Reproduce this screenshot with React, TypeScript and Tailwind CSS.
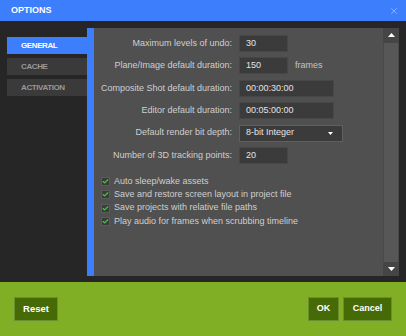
import { Check, X } from "lucide-react";

const rows = [
  { label: "Maximum levels of undo:", value: "30", width: "w-[49px]", suffix: "frames", showSuffix: false },
  { label: "Plane/Image default duration:", value: "150", width: "w-[49px]", suffix: "frames", showSuffix: true },
  { label: "Composite Shot default duration:", value: "00:00:30:00", width: "w-[95px]", suffix: "", showSuffix: false },
  { label: "Editor default duration:", value: "00:05:00:00", width: "w-[95px]", suffix: "", showSuffix: false },
];

const checks = [
  "Auto sleep/wake assets",
  "Save and restore screen layout in project file",
  "Save projects with relative file paths",
  "Play audio for frames when scrubbing timeline",
];

function Field({ value, width }: { value: string; width: string }) {
  return (
    <div className={`${width} h-[17px] bg-[#3b3b3b] border border-[#474747] flex items-center pl-[6px] text-[#e4e4e4]`}>
      {value}
    </div>
  );
}

function Row({ label, children }: { label: string; children: React.ReactNode }) {
  return (
    <div className="flex items-center h-[17px]">
      <div className="w-[138px] text-right text-[#cfcfcf] whitespace-nowrap">{label}</div>
      <div className="ml-[7px] flex items-center gap-[7px]">{children}</div>
    </div>
  );
}

export default function App() {
  return (
    <div
      className="w-[406px] h-[336px] flex flex-col bg-[#262626] text-[9px] overflow-hidden"
      style={{ fontFamily: '"Liberation Sans", Arial, sans-serif' }}
    >
      <div className="h-[21px] bg-[#3d7efd] flex items-center justify-between pl-[11px] pr-[7px]">
        <span className="text-white font-bold text-[9px]">OPTIONS</span>
        <X className="w-[10px] h-[10px] text-[#a3c0ff]" strokeWidth={1.75} />
      </div>

      <div className="flex flex-1 pt-[7px] pl-[7px] pr-[7px] pb-[6px]">
        <div className="w-[80px] flex flex-col gap-[4px] pt-[9px] text-[8px] font-bold tracking-[-0.4px]">
          <div className="h-[17px] bg-[#3d7efd] text-white flex items-center pl-[14px]">GENERAL</div>
          <div className="h-[17px] bg-[#3a3a3a] text-[#989898] flex items-center pl-[14px]">CACHE</div>
          <div className="h-[17px] bg-[#3a3a3a] text-[#989898] flex items-center pl-[14px]">ACTIVATION</div>
        </div>
        <div className="w-[7px] bg-[#3d7efd]" />
        <div className="flex-1 bg-[#505050] flex flex-col pt-[7px]">
          <div className="flex flex-col gap-[5.4px]">
            {rows.map((r) => (
              <Row key={r.label} label={r.label}>
                <Field value={r.value} width={r.width} />
                {r.showSuffix && <span className="text-[#c4c4c4]">{r.suffix}</span>}
              </Row>
            ))}
            <Row label="Default render bit depth:">
              <div className="w-[104px] h-[17px] bg-[#3b3b3b] border border-[#5f5f5f] flex items-center justify-between pl-[6px] pr-[9px] text-[#e4e4e4]">
                <span>8-bit Integer</span>
                <svg width="5" height="3" viewBox="0 0 5 3">
                  <path d="M0 0 L5 0 L2.5 3 Z" fill="#ffffff" />
                </svg>
              </div>
            </Row>
            <Row label="Number of 3D tracking points:">
              <Field value="20" width="w-[49px]" />
            </Row>
          </div>
          <div className="flex flex-col mt-[11px] pl-[7px]">
            {checks.map((c) => (
              <div key={c} className="flex items-center h-[13.3px] gap-[4px]">
                <div className="w-[9px] h-[9px] bg-[#3c3c3c] border border-[#5a5a5a] flex items-center justify-center">
                  <Check className="w-[7px] h-[7px] text-[#3fcf3a]" strokeWidth={4} />
                </div>
                <span className="text-[#cfcfcf] whitespace-nowrap">{c}</span>
              </div>
            ))}
          </div>
        </div>
        <div className="w-[16px] bg-[#454545] flex flex-col">
          <div className="h-[15px] flex items-center justify-center">
            <svg width="7" height="5" viewBox="0 0 7 5">
              <path d="M3.5 0 L7 4 L0 4 Z" fill="#ffffff" />
            </svg>
          </div>
          <div className="flex-1 bg-[#575757] border-l border-r border-[#4a4a4a]" />
          <div className="h-[14px] flex items-center justify-center">
            <svg width="7" height="5" viewBox="0 0 7 5">
              <path d="M0 0 L7 0 L3.5 4 Z" fill="#ffffff" />
            </svg>
          </div>
        </div>
      </div>

      <div className="h-[54px] bg-[#80ae25] flex items-start justify-between pt-[15px] pl-[14px] pr-[14px]">
        <button className="h-[24px] w-[44px] bg-[#466a06] border border-[#6a8f30] text-white font-bold text-[9.5px]">Reset</button>
        <div className="flex gap-[4px]">
          <button className="h-[24px] w-[31px] bg-[#466a06] border border-[#6a8f30] text-white font-bold text-[9px]">OK</button>
          <button className="h-[24px] w-[49px] bg-[#466a06] border border-[#6a8f30] text-white font-bold text-[9px]">Cancel</button>
        </div>
      </div>
    </div>
  );
}
